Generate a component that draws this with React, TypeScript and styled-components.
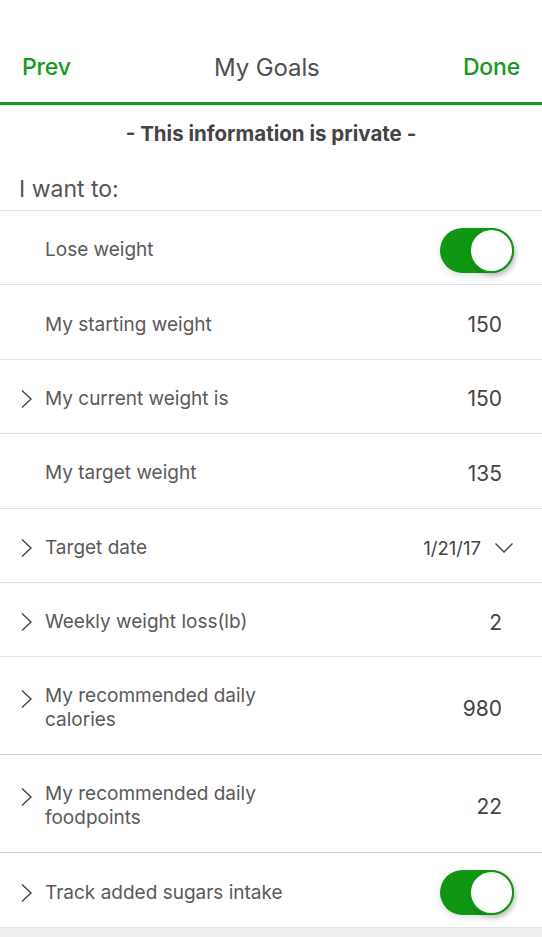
import React from "react";
import styled, { createGlobalStyle } from "styled-components";

const GREEN = "#169a1c";

const Global = createGlobalStyle`
  html, body { margin: 0; padding: 0; background: #ffffff; }
  body { font-family: Inter, "Noto Sans", "Liberation Sans", sans-serif; -webkit-font-smoothing: antialiased; }
  * { box-sizing: border-box; }
`;

const Page = styled.div`
  width: 542px;
  min-height: 937px;
  background: #efeff1;
  display: flex;
  flex-direction: column;
`;

const Header = styled.header`
  height: 105px;
  padding: 35px 22px 3px 22px;
  display: flex;
  align-items: center;
  justify-content: space-between;
  background: #fff;
  border-bottom: 3px solid ${GREEN};
`;

const NavButton = styled.span`
  color: ${GREEN};
  font-size: 23px;
  font-weight: 500;
  letter-spacing: -0.2px;
`;

const Title = styled.h1`
  margin: 0;
  color: #505050;
  font-size: 24px;
  font-weight: 400;
  letter-spacing: -0.1px;
`;

const Notice = styled.div`
  height: 56px;
  display: flex;
  align-items: center;
  justify-content: center;
  background: #fff;
  color: #444;
  font-size: 20.5px;
  font-weight: 700;
`;

const SectionLabel = styled.div`
  height: 50px;
  padding: 6px 19px 0;
  display: flex;
  align-items: center;
  background: #fff;
  color: #555;
  font-size: 23px;
  font-weight: 400;
  border-bottom: 1px solid #e3e3e3;
`;

const List = styled.div`
  background: #fff;
`;

const Row = styled.div<{ $tall?: boolean }>`
  height: ${(p) => (p.$tall ? 98 : 74.4)}px;
  display: flex;
  align-items: center;
  padding: 5px 28px 0 20px;
  border-bottom: 1px solid ${(p) => (p.$tall ? "#cfcfcf" : "#e3e3e3")};
`;

const ChevronSlot = styled.div<{ $top?: boolean }>`
  width: 25px;
  flex: none;
  align-self: ${(p) => (p.$top ? "flex-start" : "center")};
  margin-top: ${(p) => (p.$top ? "27px" : "0")};
  display: flex;
  align-items: center;
`;

const Label = styled.div`
  flex: 0 1 auto;
  max-width: 265px;
  color: #5a5a5a;
  font-size: 19px;
  line-height: 24px;
  font-weight: 400;
`;

const Spacer = styled.div`
  flex: 1;
`;

const Value = styled.div<{ $inset?: boolean }>`
  color: #444;
  font-size: 21px;
  font-weight: 400;
  display: flex;
  align-items: center;
  gap: 13px;
  margin-right: ${(p) => (p.$inset ? "12px" : "0")};
`;

const DateText = styled.span`
  font-size: 18.5px;
  color: #444;
`;

const Toggle = styled.div`
  width: 74px;
  height: 45px;
  border-radius: 23px;
  background: #0f9713;
  position: relative;
  box-shadow: 0 3px 6px rgba(0, 0, 0, 0.12);
`;

const Knob = styled.div`
  position: absolute;
  right: 0;
  top: 0;
  width: 45px;
  height: 45px;
  border-radius: 50%;
  background: #fff;
  border: 2px solid #0f9713;
  box-shadow: 2px 3px 5px rgba(0, 0, 0, 0.18);
`;

const ChevronRight = () => (
  <svg width="13" height="20" viewBox="0 0 13 20" fill="none">
    <path d="M2 1.5 L11 10 L2 18.5" stroke="#444" strokeWidth="1.4" strokeLinejoin="miter" />
  </svg>
);

const ChevronDown = () => (
  <svg width="20" height="12" viewBox="0 0 20 12" fill="none">
    <path d="M1.5 1.5 L10 10 L18.5 1.5" stroke="#444" strokeWidth="1.4" />
  </svg>
);

type Item = {
  label: string;
  value?: string;
  chevron?: boolean;
  toggle?: boolean;
  date?: boolean;
  tall?: boolean;
};

const items: Item[] = [
  { label: "Lose weight", toggle: true },
  { label: "My starting weight", value: "150" },
  { label: "My current weight is", value: "150", chevron: true },
  { label: "My target weight", value: "135" },
  { label: "Target date", value: "1/21/17", chevron: true, date: true },
  { label: "Weekly weight loss(lb)", value: "2", chevron: true },
  { label: "My recommended daily calories", value: "980", chevron: true, tall: true },
  { label: "My recommended daily foodpoints", value: "22", chevron: true, tall: true },
  { label: "Track added sugars intake", chevron: true, toggle: true },
];

export default function App() {
  return (
    <Page>
      <Global />
      <Header>
        <NavButton>Prev</NavButton>
        <Title>My Goals</Title>
        <NavButton>Done</NavButton>
      </Header>
      <Notice>- This information is private -</Notice>
      <SectionLabel>I want to:</SectionLabel>
      <List>
        {items.map((it) => (
          <Row key={it.label} $tall={it.tall}>
            <ChevronSlot $top={it.tall}>{it.chevron && <ChevronRight />}</ChevronSlot>
            <Label>{it.label}</Label>
            <Spacer />
            {it.toggle ? (
              <Toggle>
                <Knob />
              </Toggle>
            ) : it.date ? (
              <Value>
                <DateText>{it.value}</DateText>
                <ChevronDown />
              </Value>
            ) : (
              <Value $inset>{it.value}</Value>
            )}
          </Row>
        ))}
      </List>
    </Page>
  );
}
